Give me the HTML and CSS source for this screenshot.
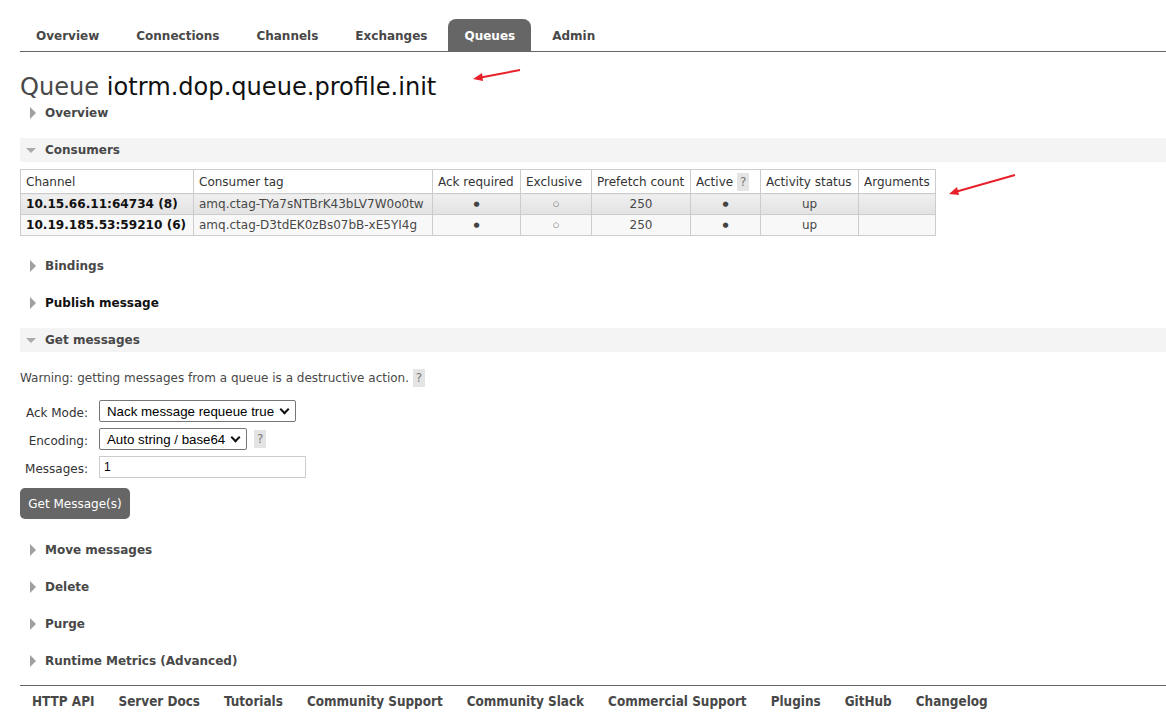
FILE: index.html
```html
<!DOCTYPE html>
<html>
<head>
<meta charset="utf-8">
<link rel="stylesheet" href="styles.css">
</head>
<body>
<div class="page">
  <nav class="tabs">
    <span class="tab">Overview</span>
    <span class="tab">Connections</span>
    <span class="tab">Channels</span>
    <span class="tab">Exchanges</span>
    <span class="tab active">Queues</span>
    <span class="tab">Admin</span>
  </nav>

  <h1 class="title"><span class="kind">Queue</span> iotrm.dop.queue.profile.init</h1>

  <div class="section"><span class="tri-r"></span>Overview</div>

  <div class="section open"><span class="tri-d"></span>Consumers</div>
  <table class="grid">
    <thead>
      <tr>
        <th class="c1">Channel</th>
        <th class="c2">Consumer tag</th>
        <th class="c3">Ack required</th>
        <th class="c4">Exclusive</th>
        <th class="c5">Prefetch count</th>
        <th class="c6">Active <span class="help">?</span></th>
        <th class="c7">Activity status</th>
        <th class="c8">Arguments</th>
      </tr>
    </thead>
    <tbody>
      <tr class="alt1">
        <td class="chan">10.15.66.11:64734 (8)</td>
        <td>amq.ctag-TYa7sNTBrK43bLV7W0o0tw</td>
        <td class="ctr dot">●</td>
        <td class="ctr dot">○</td>
        <td class="ctr">250</td>
        <td class="ctr dot">●</td>
        <td class="ctr">up</td>
        <td></td>
      </tr>
      <tr class="alt2">
        <td class="chan">10.19.185.53:59210 (6)</td>
        <td>amq.ctag-D3tdEK0zBs07bB-xE5YI4g</td>
        <td class="ctr dot">●</td>
        <td class="ctr dot">○</td>
        <td class="ctr">250</td>
        <td class="ctr dot">●</td>
        <td class="ctr">up</td>
        <td></td>
      </tr>
    </tbody>
  </table>

  <div class="section after-table"><span class="tri-r"></span>Bindings</div>
  <div class="section dark"><span class="tri-r"></span>Publish message</div>
  <div class="section open"><span class="tri-d"></span>Get messages</div>

  <div class="getbox">
    <p class="warn">Warning: getting messages from a queue is a destructive action. <span class="help">?</span></p>
    <div class="form">
      <div class="frow">
        <label class="lbl">Ack Mode:</label>
        <div class="sel sel-wide">Nack message requeue true<span class="chev"></span></div>
      </div>
      <div class="frow">
        <label class="lbl">Encoding:</label>
        <div class="sel sel-narrow">Auto string / base64<span class="chev"></span></div>
        <span class="help help-enc">?</span>
      </div>
      <div class="frow">
        <label class="lbl">Messages:</label>
        <div class="inp">1</div>
      </div>
    </div>
    <button class="btn">Get Message(s)</button>
  </div>

  <div class="section first-after"><span class="tri-r"></span>Move messages</div>
  <div class="section"><span class="tri-r"></span>Delete</div>
  <div class="section"><span class="tri-r"></span>Purge</div>
  <div class="section last"><span class="tri-r"></span>Runtime Metrics (Advanced)</div>

  <footer class="footer">
    <span>HTTP API</span>
    <span>Server Docs</span>
    <span>Tutorials</span>
    <span>Community Support</span>
    <span>Community Slack</span>
    <span>Commercial Support</span>
    <span>Plugins</span>
    <span>GitHub</span>
    <span>Changelog</span>
  </footer>
</div>

<svg class="arrow arrow1" width="50" height="16" viewBox="0 0 50 16">
  <line x1="48" y1="2" x2="6" y2="10" stroke="#e8202a" stroke-width="2"/>
  <polygon points="1,11 10,5 11,13" fill="#e8202a"/>
</svg>
<svg class="arrow arrow2" width="70" height="24" viewBox="0 0 70 24">
  <line x1="67" y1="2" x2="7" y2="19" stroke="#e8202a" stroke-width="2"/>
  <polygon points="1,21 9,14 11,22" fill="#e8202a"/>
</svg>
</body>
</html>
```

FILE: styles.css
```css
html, body {
  margin: 0;
  padding: 0;
  background: #fff;
}
body {
  font-family: "DejaVu Sans", Verdana, sans-serif;
  font-size: 12px;
  color: #484848;
  position: relative;
  width: 1166px;
  height: 727px;
  overflow: hidden;
}
.page {
  padding-left: 20px;
  display: flex;
  flex-direction: column;
}

/* tabs */
.tabs {
  margin-top: 19px;
  display: flex;
  border-bottom: 1px solid #666;
  height: 32px;
}
.tab {
  display: flex;
  align-items: center;
  padding: 1px 16px 0;
  margin-right: 5px;
  font-weight: bold;
  font-size: 12px;
  color: #484848;
  border-radius: 8px 8px 0 0;
}
.tab.active {
  background: #666;
  color: #fff;
}

/* title */
.title {
  margin: 20px 0 0;
  font-weight: normal;
  font-size: 24.1px;
  line-height: 30px;
  color: #111;
  height: 29px;
}
.title .kind {
  color: #484848;
}

/* sections */
.section {
  height: 24px;
  display: flex;
  align-items: center;
  font-weight: bold;
  font-size: 12px;
  color: #484848;
  margin-bottom: 13px;
  padding-left: 10px;
}
.section.open {
  background: #f4f4f4;
  padding-left: 6px;
  margin-bottom: 7px;
}
.section.dark { color: #111; }
.section.after-table { margin-top: 18px; }
.section.first-after { margin-top: 19px; }
.section.last { margin-bottom: 12px; }
.tri-r {
  width: 0;
  height: 0;
  border-top: 6px solid transparent;
  border-bottom: 6px solid transparent;
  border-left: 6px solid #a0a0a0;
  margin-right: 9px;
}
.tri-d {
  width: 0;
  height: 0;
  border-left: 5px solid transparent;
  border-right: 5px solid transparent;
  border-top: 5px solid #aaa;
  margin-right: 9px;
  margin-top: 1px;
}

/* table */
.grid {
  align-self: flex-start;
  border-collapse: collapse;
  font-size: 12px;
  color: #484848;
}
.grid th, .grid td {
  border: 1px solid #ccc;
  padding: 0 5px;
  white-space: nowrap;
}
.grid th {
  font-weight: normal;
  text-align: left;
  height: 23px;
  color: #333;
  background: #fff;
}
.grid td { height: 20px; }
.c1 { width: 162px; }
.c2 { width: 228px; }
.c3 { width: 77px; }
.c4 { width: 60px; }
.c5 { width: 88px; }
.c6 { width: 59px; }
.c7 { width: 87px; }
.c8 { width: 65px; }
.grid .chan {
  font-weight: bold;
  color: #111;
  font-size: 12.1px;
}
.grid .ctr { text-align: center; }
.grid td.dot { font-size: 7px; color: #444; }
.alt1 td { background: linear-gradient(#f0f0f0, #e2e2e2); }
.alt2 td { background: #f8f8f8; }

.help {
  display: inline-block;
  background: #e4e4e4;
  color: #777;
  padding: 0 3px;
  line-height: 18px;
  font-size: 12px;
  font-weight: normal;
}
.help-enc { margin-left: 1px; }

/* get messages */
.getbox {
  display: flex;
  flex-direction: column;
  align-items: flex-start;
}
.warn {
  margin: 10px 0 0;
  line-height: 18px;
}
.form {
  display: flex;
  flex-direction: column;
  gap: 6px;
  margin-top: 13px;
}
.frow {
  display: flex;
  align-items: center;
  height: 22px;
}
.lbl {
  width: 68px;
  margin-right: 11px;
  text-align: right;
  color: #333;
  padding-top: 3px;
}
.sel {
  box-sizing: border-box;
  height: 22px;
  border: 1px solid #767676;
  border-radius: 2px;
  font-family: "Liberation Sans", Arial, sans-serif;
  font-size: 13.3px;
  color: #000;
  display: flex;
  align-items: center;
  padding-left: 7px;
  position: relative;
  margin-right: 6px;
}
.sel-wide { width: 197px; }
.sel-narrow { width: 148px; }
.chev {
  position: absolute;
  right: 7px;
  top: 5px;
  width: 5px;
  height: 5px;
  border-right: 2px solid #111;
  border-bottom: 2px solid #111;
  transform: rotate(45deg);
}
.inp {
  box-sizing: border-box;
  width: 207px;
  height: 22px;
  border: 1px solid #ccc;
  font-family: "Liberation Sans", Arial, sans-serif;
  font-size: 12px;
  color: #000;
  padding-left: 4px;
  display: flex;
  align-items: center;
}
.btn {
  margin-top: 10px;
  width: 110px;
  height: 31px;
  background: #666;
  color: #fff;
  border: none;
  border-radius: 5px;
  font-family: "DejaVu Sans", Verdana, sans-serif;
  font-size: 12px;
  padding: 0;
}

/* footer */
.footer {
  border-top: 1px solid #666;
  display: flex;
  padding-top: 8px;
  padding-left: 12px;
  font-family: "DejaVu Sans Condensed", "Liberation Sans Narrow", "DejaVu Sans", sans-serif;
  font-weight: bold;
  font-size: 13.4px;
  color: #484848;
}
.footer span { margin-right: 24px; }

/* annotation arrows */
.arrow {
  position: absolute;
}
.arrow1 { left: 472px; top: 68px; }
.arrow2 { left: 948px; top: 173px; }
```
